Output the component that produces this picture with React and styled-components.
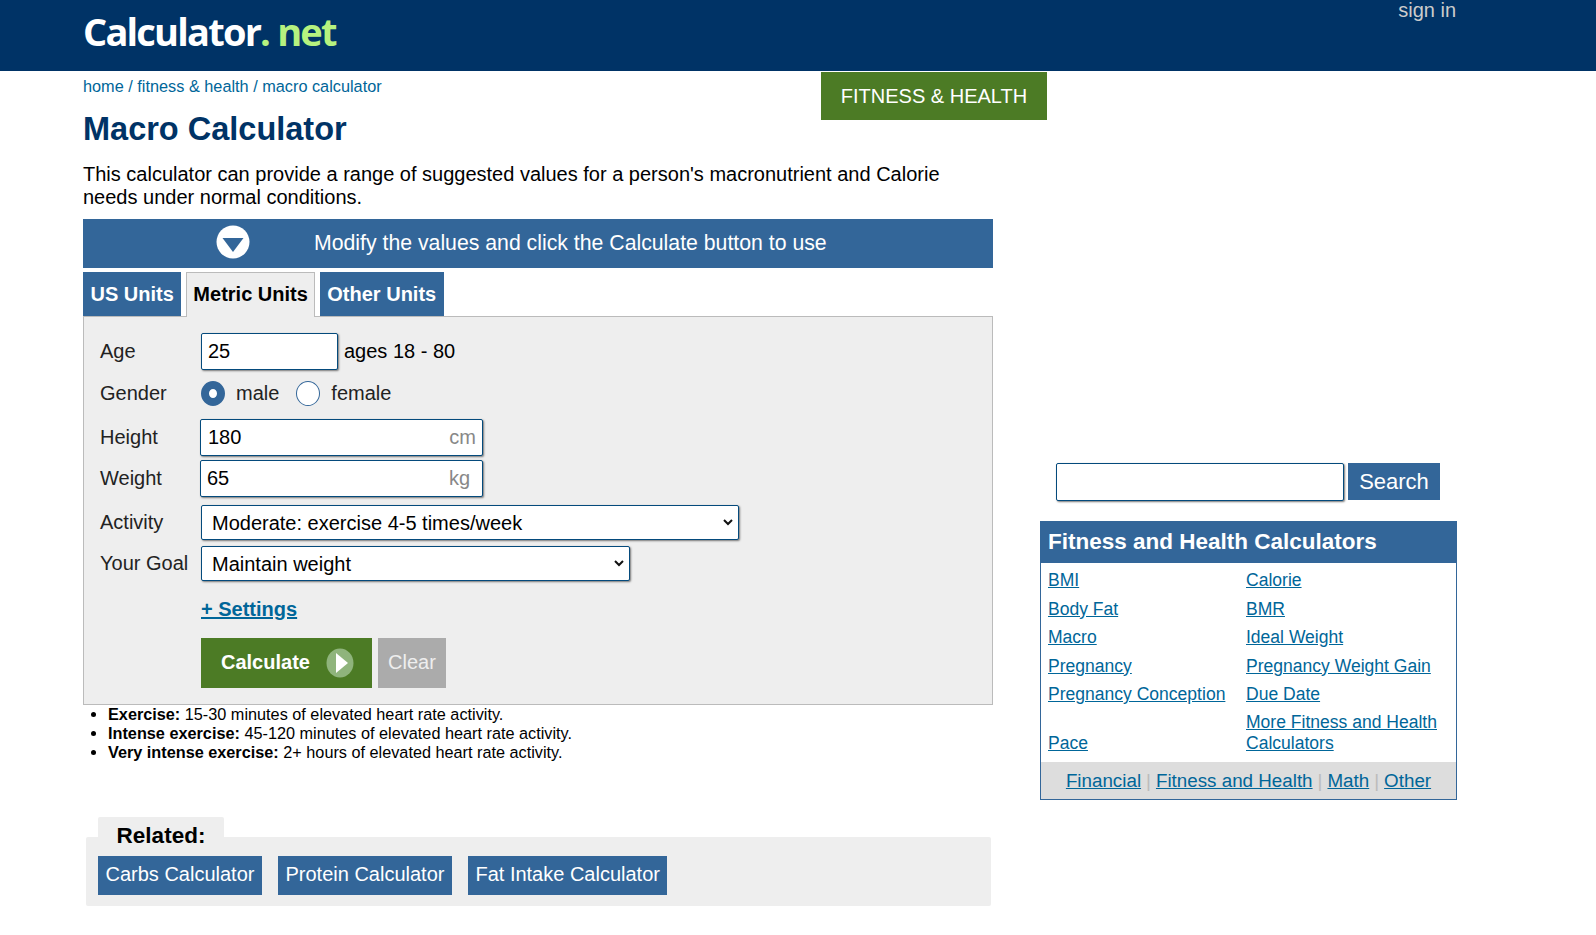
import React from 'react';
import styled, { createGlobalStyle } from 'styled-components';

const GlobalStyle = createGlobalStyle`
  html, body {
    margin: 0;
    padding: 0;
    background: #ffffff;
    color: #000000;
    font-family: "Liberation Sans", Arial, sans-serif;
  }
  * { box-sizing: border-box; }
`;

const sideLinks = [
  ['BMI', 'Calorie'],
  ['Body Fat', 'BMR'],
  ['Macro', 'Ideal Weight'],
  ['Pregnancy', 'Pregnancy Weight Gain'],
  ['Pregnancy Conception', 'Due Date'],
  ['Pace', 'More Fitness and Health Calculators'],
];

const chevron = encodeURIComponent(
  '<svg xmlns="http://www.w3.org/2000/svg" width="10" height="7"><path d="M1 1 L5 5 L9 1" fill="none" stroke="#111" stroke-width="2"/></svg>'
);

const App = () => {
  return (
    <>
      <GlobalStyle />
      <Header>
        <Logo>Calculator<LogoGreen>.</LogoGreen><LogoNet>net</LogoNet></Logo>
        <SignIn href="#">sign in</SignIn>
      </Header>
      <Page>
        <Main>
          <TopRow>
            <Crumbs><a href="#">home</a> / <a href="#">fitness &amp; health</a> / <a href="#">macro calculator</a></Crumbs>
            <Section>FITNESS &amp; HEALTH</Section>
          </TopRow>
          <Title>Macro Calculator</Title>
          <Intro>This calculator can provide a range of suggested values for a person's macronutrient and Calorie needs under normal conditions.</Intro>
          <Banner>
            <BannerIcon viewBox="0 0 34 34">
              <circle cx="17" cy="17" r="16.5" fill="#ffffff" />
              <path d="M6.5 13 H27.5 L17 27 Z" fill="#336699" />
            </BannerIcon>
            <span>Modify the values and click the Calculate button to use</span>
          </Banner>
          <Tabs>
            <Tab>US Units</Tab>
            <Tab $active>Metric Units</Tab>
            <Tab>Other Units</Tab>
          </Tabs>
          <Panel>
            <FormRow $h={37} $mb={10}>
              <Label>Age</Label>
              <Field $w={137}><Input defaultValue="25" $pad={6} /></Field>
              <Note>ages 18 - 80</Note>
            </FormRow>
            <FormRow $h={26} $mb={13}>
              <Label>Gender</Label>
              <Radio name="gender" defaultChecked />
              <RadioText>male</RadioText>
              <Radio name="gender" />
              <RadioText>female</RadioText>
            </FormRow>
            <FormRow $h={37} $mb={4}>
              <Label>Height</Label>
              <Field $w={283} $left={-1}>
                <Input defaultValue="180" $pad={7} />
                <Unit $pad={6}>cm</Unit>
              </Field>
            </FormRow>
            <FormRow $h={37} $mb={8}>
              <Label>Weight</Label>
              <Field $w={283} $left={-1}>
                <Input defaultValue="65" $pad={6} />
                <Unit $pad={12}>kg</Unit>
              </Field>
            </FormRow>
            <FormRow $h={35} $mb={6}>
              <Label>Activity</Label>
              <Select $w={538} defaultValue="moderate">
                <option value="moderate">Moderate: exercise 4-5 times/week</option>
              </Select>
            </FormRow>
            <FormRow $h={35} $mb={17}>
              <Label>Your Goal</Label>
              <Select $w={429} defaultValue="maintain">
                <option value="maintain">Maintain weight</option>
              </Select>
            </FormRow>
            <SettingsLink href="#">+ Settings</SettingsLink>
            <Actions>
              <Calculate>
                <span>Calculate</span>
                <PlayIcon viewBox="0 0 28 30">
                  <ellipse cx="14" cy="15" rx="13.5" ry="14.5" fill="#8fb47c" />
                  <path d="M10 5 L22 15 L10 25 Z" fill="#ffffff" />
                </PlayIcon>
              </Calculate>
              <Clear>Clear</Clear>
            </Actions>
          </Panel>
          <Notes>
            <li><b>Exercise:</b> 15-30 minutes of elevated heart rate activity.</li>
            <li><b>Intense exercise:</b> 45-120 minutes of elevated heart rate activity.</li>
            <li><b>Very intense exercise:</b> 2+ hours of elevated heart rate activity.</li>
          </Notes>
          <RelatedTab>Related:</RelatedTab>
          <RelatedBox>
            <RelatedLink href="#">Carbs Calculator</RelatedLink>
            <RelatedLink href="#">Protein Calculator</RelatedLink>
            <RelatedLink href="#">Fat Intake Calculator</RelatedLink>
          </RelatedBox>
        </Main>
        <Side>
          <SearchRow>
            <SearchInput />
            <SearchButton>Search</SearchButton>
          </SearchRow>
          <SideBox>
            <SideTitle>Fitness and Health Calculators</SideTitle>
            <SideGrid>
              {sideLinks.flat().map((item) => (
                <SideCell key={item}><a href="#">{item}</a></SideCell>
              ))}
            </SideGrid>
            <SideFooter>
              <a href="#">Financial</a><Sep>|</Sep>
              <a href="#">Fitness and Health</a><Sep>|</Sep>
              <a href="#">Math</a><Sep>|</Sep>
              <a href="#">Other</a>
            </SideFooter>
          </SideBox>
        </Side>
      </Page>
    </>
  );
};

export default App;

const Header = styled.header`
  display: flex;
  justify-content: space-between;
  align-items: flex-start;
  height: 71px;
  padding: 0 140px 0 83px;
  background: #003366;
`;

const Logo = styled.div`
  margin-top: 7px;
  font-family: "Open Sans", sans-serif;
  font-size: 38px;
  font-weight: 700;
  line-height: 48px;
  letter-spacing: -1.8px;
  color: #ffffff;
  white-space: pre;
`;

const LogoGreen = styled.span`
  color: #b6f27f;
`;

const LogoNet = styled(LogoGreen)`
  margin-left: 8px;
`;

const SignIn = styled.a`
  font-size: 20px;
  line-height: 20px;
  color: #cccccc;
  text-decoration: none;
`;

const Page = styled.div`
  display: flex;
  align-items: flex-start;
  padding-left: 83px;
`;

const Main = styled.main`
  width: 910px;
  flex: none;
`;

const TopRow = styled.div`
  display: flex;
  justify-content: space-between;
  align-items: flex-start;
  width: 964px;
  height: 39px;
`;

const Crumbs = styled.div`
  margin-top: 6px;
  font-size: 16.3px;
  line-height: 18px;
  color: #006699;
  a { color: #006699; text-decoration: none; }
`;

const Section = styled.div`
  flex: none;
  width: 226px;
  height: 48px;
  margin-top: 1px;
  background: #4c7b25;
  color: #ffffff;
  font-size: 20px;
  line-height: 48px;
  text-align: center;
`;

const Title = styled.h1`
  margin: 0 0 14px;
  font-size: 32.5px;
  line-height: 39px;
  font-weight: 700;
  color: #003366;
`;

const Intro = styled.p`
  margin: 0 0 10px;
  font-size: 20px;
  line-height: 23px;
`;

const Banner = styled.div`
  display: flex;
  align-items: center;
  height: 49px;
  padding-left: 133px;
  gap: 64px;
  background: #336699;
  color: #ffffff;
  font-size: 21.25px;
`;

const BannerIcon = styled.svg`
  width: 34px;
  height: 34px;
  flex: none;
  margin-top: -3px;
`;

const Tabs = styled.div`
  display: flex;
  gap: 4.5px;
  height: 44px;
  margin-top: 4px;
`;

const Tab = styled.div`
  height: ${(p) => (p.$active ? '45px' : '44px')};
  padding: 0 ${(p) => (p.$active ? '6.5px' : '7.5px')};
  border: ${(p) => (p.$active ? '1px solid #bbbbbb' : 'none')};
  border-bottom: none;
  background: ${(p) => (p.$active ? '#eeeeee' : '#336699')};
  color: ${(p) => (p.$active ? '#000000' : '#ffffff')};
  font-size: 20px;
  font-weight: 700;
  line-height: ${(p) => (p.$active ? '42px' : '44px')};
  position: relative;
  z-index: 1;
`;

const Panel = styled.section`
  height: 389px;
  padding: 16px 16px 0;
  background: #eeeeee;
  border: 1px solid #bbbbbb;
`;

const FormRow = styled.div`
  display: flex;
  align-items: center;
  height: ${(p) => p.$h}px;
  margin-bottom: ${(p) => p.$mb}px;
  font-size: 20px;
`;

const Label = styled.div`
  flex: none;
  width: 101px;
  color: #222222;
`;

const Field = styled.div`
  display: flex;
  align-items: center;
  width: ${(p) => p.$w}px;
  height: 100%;
  margin-left: ${(p) => p.$left || 0}px;
  background: #ffffff;
  border: 1px solid #044a7c;
  border-radius: 2px;
  box-shadow: 1px 1px 2px #777777;
`;

const Input = styled.input`
  flex: 1;
  min-width: 0;
  height: 100%;
  padding: 0 0 0 ${(p) => p.$pad}px;
  border: none;
  outline: none;
  background: transparent;
  font: 20px "Liberation Sans", Arial, sans-serif;
  color: #000000;
`;

const Unit = styled.span`
  padding-right: ${(p) => p.$pad}px;
  color: #888888;
`;

const Note = styled.span`
  margin-left: 6px;
`;

const Radio = styled.input.attrs({ type: 'radio' })`
  appearance: none;
  flex: none;
  width: 24px;
  height: 25px;
  margin: 0;
  background: #ffffff;
  border: 1px solid #336699;
  border-radius: 50%;
  &:checked {
    border: 8px solid #336699;
  }
`;

const RadioText = styled.span`
  margin: 0 17px 0 11px;
  color: #222222;
`;

const Select = styled.select`
  appearance: none;
  width: ${(p) => p.$w}px;
  height: 100%;
  padding-left: 10px;
  background: #ffffff url("data:image/svg+xml,${chevron}") no-repeat right 5px center;
  border: 1px solid #044a7c;
  border-radius: 2px;
  box-shadow: 1px 1px 2px #777777;
  font: 20px "Liberation Sans", Arial, sans-serif;
  color: #000000;
`;

const SettingsLink = styled.a`
  display: inline-block;
  margin-left: 101px;
  font-size: 20px;
  font-weight: 700;
  line-height: 23px;
  color: #006699;
`;

const Actions = styled.div`
  display: flex;
  gap: 6px;
  margin: 17px 0 0 101px;
`;

const Calculate = styled.button`
  display: flex;
  align-items: center;
  justify-content: space-between;
  width: 171px;
  height: 50px;
  padding: 0 18px 0 20px;
  border: none;
  background: #4c7b25;
  color: #ffffff;
  font: 700 20px "Liberation Sans", Arial, sans-serif;
  span { margin-bottom: 2px; }
`;

const PlayIcon = styled.svg`
  width: 28px;
  height: 30px;
`;

const Clear = styled.button`
  width: 68px;
  height: 50px;
  padding: 0 0 2px;
  border: none;
  background: #ababab;
  color: #eeeeee;
  font: 20px "Liberation Sans", Arial, sans-serif;
`;

const Notes = styled.ul`
  margin: 0;
  padding: 0 0 0 25px;
  font-size: 16.25px;
  line-height: 19px;
`;

const RelatedTab = styled.div`
  width: 126px;
  height: 20px;
  margin: 55px 0 0 15px;
  padding-top: 7px;
  background: #eeeeee;
  border-radius: 2px 2px 0 0;
  font-size: 22.5px;
  font-weight: 700;
  line-height: 24px;
  text-align: center;
`;

const RelatedBox = styled.div`
  display: flex;
  gap: 16px;
  width: 905px;
  height: 69px;
  margin-left: 3px;
  padding: 19px 12px 0;
  background: #eeeeee;
  border-radius: 2px;
`;

const RelatedLink = styled.a`
  height: 39px;
  padding: 0 7.5px;
  background: #336699;
  color: #ffffff;
  font-size: 20px;
  line-height: 37px;
  text-decoration: none;
  white-space: nowrap;
`;

const Side = styled.aside`
  width: 417px;
  margin-left: 47px;
  padding-top: 392px;
  flex: none;
`;

const SearchRow = styled.div`
  display: flex;
  gap: 4px;
  height: 38px;
  margin: 0 0 20px 16px;
`;

const SearchInput = styled.input`
  width: 288px;
  height: 38px;
  border: 1px solid #044a7c;
  border-radius: 2px;
  background: #ffffff;
  box-shadow: 1px 1px 2px #777777;
  outline: none;
`;

const SearchButton = styled.button`
  width: 92px;
  height: 37px;
  padding: 0;
  border: none;
  background: #336699;
  color: #ffffff;
  font: 22px "Liberation Sans", Arial, sans-serif;
`;

const SideBox = styled.div`
  border: 1px solid #336699;
`;

const SideTitle = styled.div`
  height: 41px;
  padding-left: 7px;
  background: #336699;
  color: #ffffff;
  font-size: 22.5px;
  font-weight: 700;
  line-height: 40px;
`;

const SideGrid = styled.div`
  display: grid;
  grid-template-columns: 198px 1fr;
  padding: 0 7px 8px;
  align-items: end;
`;

const SideCell = styled.div`
  padding-top: 7.4px;
  font-size: 17.55px;
  line-height: 21px;
  a { color: #006699; }
`;

const SideFooter = styled.div`
  display: flex;
  justify-content: center;
  align-items: center;
  height: 37px;
  background: #dddddd;
  font-size: 18.8px;
  a { color: #006699; }
`;

const Sep = styled.span`
  margin: 0 5px;
  color: #bbbbbb;
`;
